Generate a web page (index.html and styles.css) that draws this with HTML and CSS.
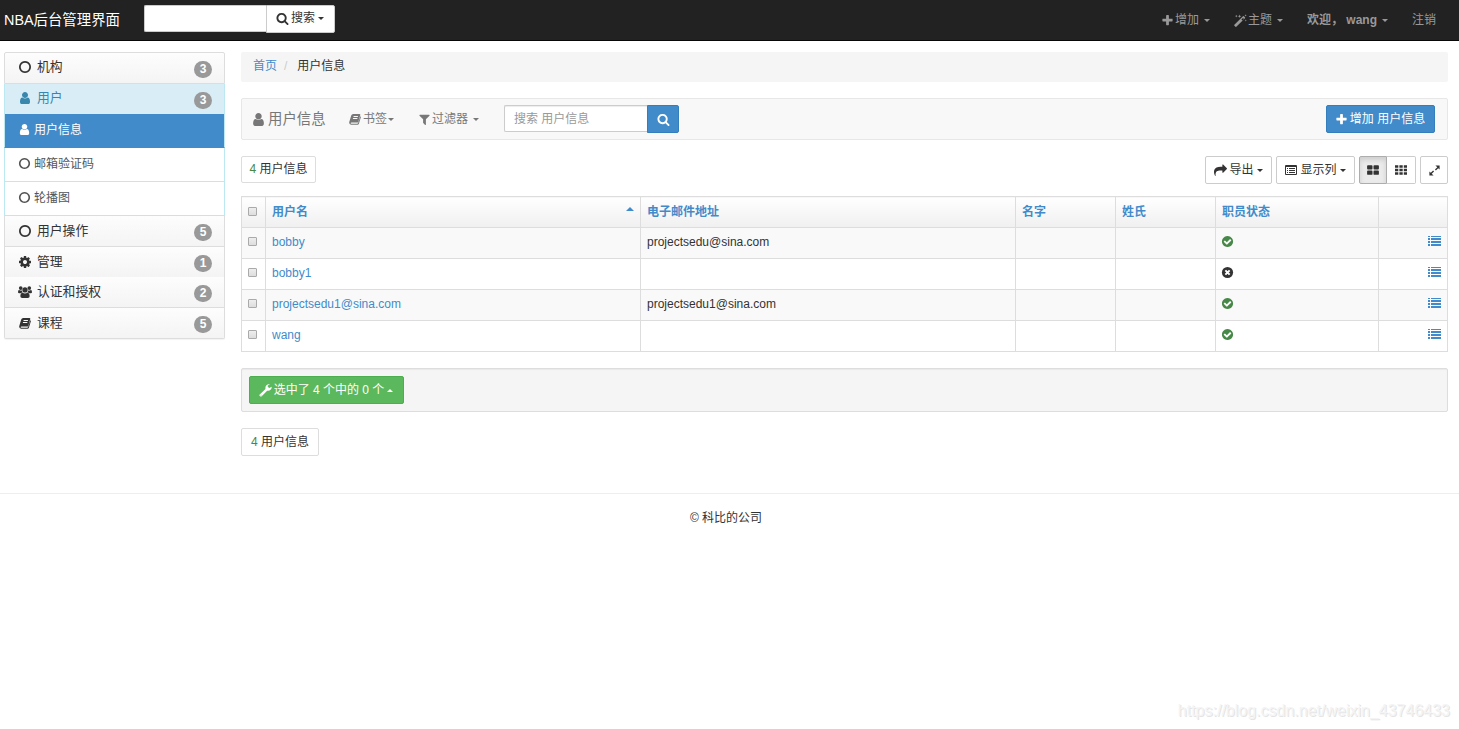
FILE: index.html
```html
<!DOCTYPE html>
<html lang="zh-CN">
<head>
    <meta charset="UTF-8">
    <meta name="viewport" content="width=device-width, initial-scale=1.0">
    <title>用户信息 | NBA后台管理界面</title>
    <link rel="stylesheet" href="styles.css">
</head>
<body>
    <svg class="sprite">
        <symbol id="search" viewBox="0 0 1792 1792"><path d="M1216 832q0-185-131.5-316.5t-316.5-131.5-316.5 131.5-131.5 316.5 131.5 316.5 316.5 131.5 316.5-131.5 131.5-316.5zm512 832q0 52-38 90t-90 38q-54 0-90-38l-343-342q-179 124-399 124-143 0-273.5-55.5t-225-150-150-225-55.5-273.5 55.5-273.5 150-225 225-150 273.5-55.5 273.5 55.5 225 150 150 225 55.5 273.5q0 220-124 399l343 343q37 37 37 90z"/></symbol>
        <symbol id="plus" viewBox="0 0 1792 1792"><path d="M1600 736v192q0 40-28 68t-68 28h-416v416q0 40-28 68t-68 28h-192q-40 0-68-28t-28-68v-416h-416q-40 0-68-28t-28-68v-192q0-40 28-68t68-28h416v-416q0-40 28-68t68-28h192q40 0 68 28t28 68v416h416q40 0 68 28t28 68z"/></symbol>
        <symbol id="user" viewBox="0 0 1792 1792"><path d="M1536 1399q0 109-62.5 187t-150.5 78h-854q-88 0-150.5-78t-62.5-187q0-85 8.5-160.5t31.5-152 58.5-131 94-89 134.500-34.500q131 128 313 128t313-128q76 0 134.500 34.500t94 89 58.500 131 31.500 152 8.500 160.500zm-256-887q0 159-112.500 271.500t-271.500 112.500-271.500-112.500-112.500-271.500 112.500-271.500 271.500-112.500 271.500 112.500 112.500 271.500z"/></symbol>
        <symbol id="circle-o" viewBox="0 0 1792 1792"><path d="M896 352q-148 0-273 73t-198 198-73 273 73 273 198 198 273 73 273-73 198-198 73-273-73-273-198-198-273-73zm768 544q0 209-103 385.5t-279.5 279.5-385.5 103-385.5-103-279.5-279.5-103-385.5 103-385.5 279.5-279.5 385.5-103 385.5 103 279.5 279.5 103 385.5z"/></symbol>
        <symbol id="cog" viewBox="0 0 1792 1792"><path d="M1152 896q0-106-75-181t-181-75-181 75-75 181 75 181 181 75 181-75 75-181zm512-109v222q0 12-8 23t-20 13l-185 28q-19 54-39 91 35 50 107 138 10 12 10 25t-9 23q-27 37-99 108t-94 71q-12 0-26-9l-138-108q-44 23-91 38-16 136-29 186-7 28-36 28h-222q-14 0-24.5-8.5t-11.5-21.5l-28-184q-49-16-90-37l-141 107q-10 9-25 9-14 0-25-11-126-114-165-168-7-10-7-23 0-12 8-23 15-21 51-66.5t54-70.5q-27-50-41-99l-183-27q-13-2-21-12.5t-8-23.5v-222q0-12 8-23t19-13l186-28q14-46 39-92-40-57-107-138-10-12-10-24 0-10 9-23 26-36 98.5-107.5t94.5-71.5q13 0 26 10l138 107q44-23 91-38 16-136 29-186 7-28 36-28h222q14 0 24.5 8.5t11.5 21.5l28 184q49 16 90 37l142-107q9-9 24-9 13 0 25 10 129 119 165 170 7 8 7 22 0 12-8 23-15 21-51 66.5t-54 70.5q26 50 41 98l183 28q13 2 21 12.5t8 23.5z"/></symbol>
        <symbol id="check" viewBox="0 0 1792 1792"><path d="M1412 734q0-28-18-46l-91-90q-19-19-45-19t-45 19l-408 407-226-226q-19-19-45-19t-45 19l-91 90q-18 18-18 46 0 27 18 45l362 362q19 19 45 19 27 0 46-19l543-543q18-18 18-45zm252 162q0 209-103 385.5t-279.5 279.5-385.5 103-385.5-103-279.5-279.5-103-385.5 103-385.5 279.5-279.5 385.5-103 385.5 103 279.5 279.5 103 385.5z"/></symbol>
        <symbol id="times" viewBox="0 0 14 14"><circle cx="7" cy="7" r="6"/><path d="M4.7 4.700l4.600 4.600M9.300 4.700l-4.600 4.600" stroke="#fff" stroke-width="2.100"/></symbol>
        <symbol id="filter" viewBox="0 0 1792 1792"><path d="M1595 295q17 41-14 70l-493 493v742q0 42-39 59-13 5-25 5-27 0-45-19l-256-256q-19-19-19-45v-486l-493-493q-31-29-14-70 17-39 59-39h1280q42 0 59 39z"/></symbol>
        <symbol id="share" viewBox="0 0 1792 1792"><path d="M1792 640q0 26-19 45l-512 512q-19 19-45 19t-45-19-19-45v-256h-224q-98 0-175.5 6t-154 21.5-133 42.5-105.5 69.5-80 101-48.5 138.5-17.5 181q0 55 5 123 0 6 2.5 23.5t2.5 26.5q0 15-8.5 25t-23.5 10q-16 0-28-17-7-9-13-22t-13.5-30-10.5-24q-127-285-127-451 0-199 53-333 162-403 875-403h224v-256q0-26 19-45t45-19 45 19l512 512q19 19 19 45z"/></symbol>
        <symbol id="book" viewBox="0 0 12 12"><path fill-rule="evenodd" d="M4.200 1h6.300q1 0 .8.900L9.300 8.700q-.3.900-1.200.9H2.400q-1 0-.8.700.1.400.8.400h5.800q.7 0 .9-.7L11.300 3.300q.8.400.5 1.300L9.900 10.700q-.3 1-1.400 1H2.100Q0 11.300.2 9.300L2.200 2.600Q2.700 1 4.200 1zM4.700 3l-.3 1h4.400l.3-1zM4.100 5l-.3 1h4.400l.3-1z"/></symbol>
        <symbol id="magic" viewBox="0 0 14 14"><path fill-rule="evenodd" d="M.4 11.700l9.300-9.300q.5-.4.900 0l1.200 1.200q.4.500 0 .9L2.500 13.800q-.4.300-.9 0L.4 12.600q-.4-.4 0-.9zM8 6l1 1 1.700-1.700-1-1zM2.500.7l.4 1.100 1.100.4-1.100.4-.4 1.100-.4-1.100-1.100-.4 1.100-.4zM6 .5l.5 1.400 1.400.5-1.400.5L6 4.300l-.5-1.400-1.400-.5 1.400-.5zM12.500.3l.3.900.9.300-.9.300-.3.900-.3-.9-.9-.3.900-.3zM12.700 5.700l.3.900.9.300-.9.300-.3.900-.3-.9-.9-.3.900-.3z"/></symbol>
        <symbol id="group" viewBox="0 0 16 14"><circle cx="3.100" cy="2.500" r="2.100"/><circle cx="12.900" cy="2.500" r="2.100"/><circle cx="8" cy="4.700" r="3"/><path d="M0 7.200q0-2.500 1.200-2.500 2 1 3.200.5.100 1.400.8 2.300-1.300.1-2.200 1H1.500Q0 8.500 0 7.200zM16 7.200q0-2.500-1.200-2.500-2 1-3.200.5-.1 1.400-.8 2.300 1.300.1 2.200 1h1.500q1.500 0 1.500-1.300zM2.700 11.800q0-3.800 2.500-4 2.800 1.700 5.600 0 2.500.2 2.500 4 0 2-2 2H4.700q-2 0-2-2z"/></symbol>
        <symbol id="list" viewBox="0 0 13 10"><path d="M0 0h2v1H0zM3 0h10v1H3zM0 2h2v2H0zM3 2h10v2H3zM0 5h2v2H0zM3 5h10v2H3zM0 8h2v2H0zM3 8h10v2H3z"/></symbol>
        <symbol id="list-alt" viewBox="0 0 12 10"><path fill-rule="evenodd" d="M1 0h10q1 0 1 1v8q0 1-1 1H1q-1 0-1-1V1q0-1 1-1zM1 2v7h10V2zM2 3h1v1H2zM4 3h6v1H4zM2 5h1v1H2zM4 5h6v1H4zM2 7h1v1H2zM4 7h6v1H4z"/></symbol>
        <symbol id="th-large" viewBox="0 0 12 10"><path d="M1 .2h3.600q.9 0 .9.900v2.500q0 .9-.9.900H1q-.9 0-.9-.9V1.100q0-.9.900-.9zM7.400.2H11q.9 0 .9.900v2.500q0 .9-.9.900H7.400q-.9 0-.9-.9V1.100q0-.9.900-.9zM1 5.500h3.600q.9 0 .9.900v2.500q0 .9-.9.900H1q-.9 0-.9-.9V6.400q0-.9.900-.9zM7.400 5.500H11q.9 0 .9.900v2.500q0 .9-.9.900H7.400q-.9 0-.9-.9V6.400q0-.9.900-.9z"/></symbol>
        <symbol id="th" viewBox="0 0 12 10"><path d="M0 .3h3.300v2.500H0zM4.400.3h3.300v2.500H4.400zM8.800.3H12v2.500H8.800zM0 3.800h3.300v2.500H0zM4.400 3.800h3.300v2.500H4.400zM8.800 3.800H12v2.500H8.800zM0 7.300h3.300v2.500H0zM4.400 7.300h3.300v2.500H4.400zM8.800 7.300H12v2.500H8.800z"/></symbol>
        <symbol id="expand" viewBox="0 0 14 14"><path d="M8 1.500h4.500V6L11 4.500 8.500 7l-1-1L10 3.500zM6 12.500H1.500V8L3 9.500 5.500 7l1 1L4 10.500z"/></symbol>
        <symbol id="wrench" viewBox="0 0 14 14"><path fill-rule="evenodd" d="M7 5.300L.8 11.200q-.8.800 0 1.600l.5.500q.8.700 1.600 0l5.900-6.100q2.300.4 3.900-1.200Q13.900 4.700 13.600 2.900L11.300 4.400 9.500 3.300V1.700L11.900.4Q9.600-.2 8 1.400 6.500 3 7 5.300zM1.700 12.400h.9v-.9h-.9z"/></symbol>
    </svg>

    <nav class="topbar">
        <a class="brand">NBA后台管理界面</a>
        <div class="top-search">
            <input type="text">
            <button class="btn"><svg class="icon"><use href="#search"/></svg>搜索<i class="caret"></i></button>
        </div>
        <ul class="top-menu">
            <li><svg class="icon"><use href="#plus"/></svg>增加<i class="caret"></i></li>
            <li><svg class="icon"><use href="#magic"/></svg>主题<i class="caret"></i></li>
            <li><strong>欢迎， wang</strong><i class="caret"></i></li>
            <li>注销</li>
        </ul>
    </nav>

    <div class="container">
        <aside class="sidebar">
            <div class="panel"><svg class="icon"><use href="#circle-o"/></svg>机构<span class="badge">3</span></div>
            <div class="panel info"><svg class="icon"><use href="#user"/></svg>用户<span class="badge">3</span></div>
            <div class="submenu">
                <a class="active"><svg class="icon"><use href="#user"/></svg>用户信息</a>
                <a><svg class="icon"><use href="#circle-o"/></svg>邮箱验证码</a>
                <a><svg class="icon"><use href="#circle-o"/></svg>轮播图</a>
            </div>
            <div class="panel"><svg class="icon"><use href="#circle-o"/></svg>用户操作<span class="badge">5</span></div>
            <div class="panel no-line"><svg class="icon"><use href="#cog"/></svg>管理<span class="badge">1</span></div>
            <div class="panel"><svg class="icon"><use href="#group"/></svg>认证和授权<span class="badge">2</span></div>
            <div class="panel"><svg class="icon book"><use href="#book"/></svg>课程<span class="badge">5</span></div>
        </aside>

        <main class="content">
            <div class="breadcrumb"><a>首页</a><span class="sep">/</span><span>用户信息</span></div>

            <div class="model-nav">
                <span class="model-title"><svg class="icon"><use href="#user"/></svg>用户信息</span>
                <span class="bookmark"><svg class="icon book"><use href="#book"/></svg>书签<i class="caret"></i></span>
                <span class="filters"><svg class="icon"><use href="#filter"/></svg>过滤器<i class="caret"></i></span>
                <div class="model-search">
                    <input type="text" placeholder="搜索 用户信息">
                    <button class="btn primary"><svg class="icon"><use href="#search"/></svg></button>
                </div>
                <button class="btn primary add"><svg class="icon"><use href="#plus"/></svg>增加 用户信息</button>
            </div>

            <div class="toolbar">
                <span class="count"><b>4</b> 用户信息</span>
                <div class="tools">
                    <button class="btn export"><svg class="icon"><use href="#share"/></svg>导出<i class="caret"></i></button>
                    <button class="btn columns"><svg class="icon grid"><use href="#list-alt"/></svg>显示列<i class="caret"></i></button>
                    <div class="btn-group">
                        <button class="btn pressed"><svg class="icon grid"><use href="#th-large"/></svg></button>
                        <button class="btn"><svg class="icon grid"><use href="#th"/></svg></button>
                    </div>
                    <button class="btn square"><svg class="icon"><use href="#expand"/></svg></button>
                </div>
            </div>

            <table class="results">
                <colgroup><col class="c-check"><col class="c-wide"><col class="c-wide"><col class="c-name"><col class="c-name"><col class="c-status"><col></colgroup>
                <thead>
                    <tr>
                        <th><input type="checkbox"></th>
                        <th><div class="sorted">用户名<i class="caret up"></i></div></th>
                        <th>电子邮件地址</th>
                        <th>名字</th>
                        <th>姓氏</th>
                        <th>职员状态</th>
                        <th></th>
                    </tr>
                </thead>
                <tbody>
                    <tr>
                        <td><input type="checkbox"></td>
                        <td><a>bobby</a></td>
                        <td>projectsedu@sina.com</td>
                        <td></td>
                        <td></td>
                        <td><svg class="icon yes"><use href="#check"/></svg></td>
                        <td class="detail"><svg class="icon"><use href="#list"/></svg></td>
                    </tr>
                    <tr>
                        <td><input type="checkbox"></td>
                        <td><a>bobby1</a></td>
                        <td></td>
                        <td></td>
                        <td></td>
                        <td><svg class="icon"><use href="#times"/></svg></td>
                        <td class="detail"><svg class="icon"><use href="#list"/></svg></td>
                    </tr>
                    <tr>
                        <td><input type="checkbox"></td>
                        <td><a>projectsedu1@sina.com</a></td>
                        <td>projectsedu1@sina.com</td>
                        <td></td>
                        <td></td>
                        <td><svg class="icon yes"><use href="#check"/></svg></td>
                        <td class="detail"><svg class="icon"><use href="#list"/></svg></td>
                    </tr>
                    <tr>
                        <td><input type="checkbox"></td>
                        <td><a>wang</a></td>
                        <td></td>
                        <td></td>
                        <td></td>
                        <td><svg class="icon yes"><use href="#check"/></svg></td>
                        <td class="detail"><svg class="icon"><use href="#list"/></svg></td>
                    </tr>
                </tbody>
            </table>

            <div class="actions">
                <button class="btn success"><svg class="icon"><use href="#wrench"/></svg>选中了 4 个中的 0 个<i class="caret up"></i></button>
            </div>

            <span class="count bottom"><b>4</b> 用户信息</span>
        </main>
    </div>

    <footer>© 科比的公司</footer>
    <div class="watermark">https://blog.csdn.net/weixin_43746433</div>
</body>
</html>
```
FILE: styles.css
```css
* {
    box-sizing: border-box;
}

body {
    margin: 0;
    height: 729px;
    position: relative;
    overflow: hidden;
    background: #fff;
    color: #333;
    font: 12px/18px "Liberation Sans", "Noto Sans CJK SC", sans-serif;
}

a {
    color: #428bca;
}

input, button {
    font: inherit;
    margin: 0;
}

.sprite {
    display: none;
}

.icon {
    width: 13px;
    height: 13px;
    flex: none;
    fill: currentColor;
}

.icon.book {
    width: 12px;
    height: 12px;
}

.icon.grid {
    width: 12px;
    height: 10px;
}

.caret {
    width: 0;
    height: 0;
    margin-left: 3px;
    border: 3.5px solid transparent;
    border-top: 3.5px solid currentColor;
    border-bottom: 0;
}

.caret.up {
    border-top: 0;
    border-bottom: 3px solid currentColor;
}

.btn {
    display: flex;
    align-items: center;
    justify-content: center;
    height: 28px;
    padding: 0;
    background: #fff;
    border: 1px solid #ccc;
    border-radius: 2px;
    color: #333;
    white-space: nowrap;
}

.btn .icon {
    margin-right: 2px;
}

.primary {
    background: #428bca;
    border-color: #357ebd;
    color: #fff;
}

/* top bar */
.topbar {
    display: flex;
    height: 41px;
    padding-left: 4px;
    background: #222;
    border-bottom: 1px solid #080808;
}

.brand {
    width: 140px;
    font-size: 14.4px;
    line-height: 41px;
    color: #fff;
    white-space: nowrap;
}

.top-search {
    display: flex;
    padding-top: 5px;
}

.top-search input {
    width: 122px;
    height: 27px;
    border: 1px solid #ccc;
    border-right: 0;
    border-radius: 2px 0 0 2px;
}

.top-search .btn {
    width: 69px;
    padding: 0 1px 2px 0;
    border-radius: 0 2px 2px 0;
}

.top-menu {
    display: flex;
    margin: 0 23px 0 auto;
    padding: 0;
    gap: 24px;
    list-style: none;
    color: #999;
}

.top-menu li {
    display: flex;
    align-items: center;
    white-space: pre;
}

.top-menu .icon {
    margin-right: 1px;
}

.top-menu .caret {
    margin-left: 5px;
}

/* layout */
.container {
    display: flex;
    gap: 16px;
    padding: 11px 11px 0 4px;
}

.sidebar {
    width: 221px;
    flex: none;
}

.content {
    flex: 1;
}

/* side menu */
.panel {
    display: flex;
    align-items: center;
    height: 31px;
    padding: 0 12px 1px 13px;
    border: 1px solid #ddd;
    border-top: 0;
    background: linear-gradient(#fdfdfd, #f4f4f4);
    font-size: 12.8px;
}

.panel:first-child {
    height: 32px;
    padding-bottom: 2px;
    border-top: 1px solid #ddd;
    border-radius: 2px 2px 0 0;
}

.panel:last-child {
    border-radius: 0 0 2px 2px;
    box-shadow: 0 1px 1px rgba(0, 0, 0, 0.05);
}

.panel.info {
    height: 30px;
    padding-bottom: 2px;
    border-color: #bce8f1;
    border-bottom: 0;
    background: #d9edf7;
    color: #3a87ad;
}

.panel.no-line {
    height: 30px;
    border-bottom: 0;
}

.panel .icon {
    width: 14px;
    height: 14px;
    margin-right: 5px;
}

.panel .icon.book {
    width: 12px;
    height: 12px;
    margin: 0 6px 0 1px;
}

.badge {
    width: 18px;
    height: 17px;
    margin: 4px 0 0 auto;
    border-radius: 9px;
    background: #999;
    color: #fff;
    font-size: 12px;
    font-weight: bold;
    line-height: 17px;
    text-align: center;
}

.submenu a {
    display: flex;
    align-items: center;
    height: 34px;
    padding: 0 0 2px 13px;
    border: 1px solid #ddd;
    border-width: 0 1px 1px;
    border-left-color: #bce8f1;
    border-right-color: #bce8f1;
    color: #555;
}

.submenu a:last-child {
    border-bottom-color: #bce8f1;
}

.submenu .active {
    border-bottom-color: #428bca;
    background: #428bca;
    color: #fff;
}

.submenu .icon {
    margin-right: 3px;
}

/* content header */
.breadcrumb {
    display: flex;
    height: 30px;
    padding: 0 12px;
    border-radius: 2px;
    background: #f5f5f5;
    line-height: 28px;
}

.sep {
    margin: 0 10px 0 7px;
    color: #ccc;
}

.model-nav {
    display: flex;
    align-items: center;
    height: 42px;
    margin: 16px 0;
    padding: 0 12px 0 10px;
    background: #f8f8f8;
    border: 1px solid #e7e7e7;
    border-radius: 2px;
    color: #777;
}

.model-nav span {
    display: flex;
    align-items: center;
}

.model-title {
    width: 97px;
    font-size: 14.4px;
}

.model-title .icon {
    width: 15px;
    height: 15px;
    margin: 0 2px 0 -1px;
}

.bookmark {
    width: 69px;
}

.bookmark .icon {
    margin-right: 2px;
}

.bookmark .caret {
    margin-left: 1px;
}

.filters {
    width: 86px;
}

.filters .icon {
    margin-right: 1px;
}

.filters .caret {
    margin-left: 5px;
}

.model-search {
    display: flex;
}

.model-search input {
    width: 143px;
    height: 27px;
    padding: 0 9px;
    border: 1px solid #ccc;
    border-right: 0;
    border-radius: 2px 0 0 2px;
    box-shadow: inset 0 1px 1px rgba(0, 0, 0, 0.075);
}

.model-search input::placeholder {
    color: #999;
}

.model-search .btn {
    width: 32px;
    border-radius: 0 2px 2px 0;
}

.model-search .icon {
    margin: 0;
}

.add {
    width: 109px;
    margin-left: auto;
}

.add .icon {
    margin: 0 2px 0 -1px;
}

.toolbar {
    display: flex;
    justify-content: space-between;
    height: 28px;
    margin-bottom: 12px;
}

.count {
    display: block;
    width: 75px;
    height: 27px;
    border: 1px solid #ddd;
    border-radius: 2px;
    line-height: 25px;
    text-align: center;
    white-space: nowrap;
}

.count b {
    color: #468847;
    font-weight: normal;
}

.count.bottom {
    width: 78px;
    height: 28px;
    line-height: 26px;
}

.tools {
    display: flex;
    gap: 4px;
}

.export {
    width: 67px;
}

.columns {
    width: 79px;
}

.columns .icon.grid {
    margin-right: 3px;
}

.btn-group {
    display: flex;
}

.btn-group .btn, .square {
    width: 28px;
}

.btn-group .icon, .square .icon {
    margin: 0;
}

.btn-group .btn:last-child {
    width: 29px;
    border-left: 0;
    border-radius: 0 2px 2px 0;
}

.btn-group .pressed {
    background: #ebebeb;
    border-color: #adadad;
    border-radius: 2px 0 0 2px;
    box-shadow: inset 0 3px 5px rgba(0, 0, 0, 0.125);
}

/* result list */
.results {
    width: 1207px;
    table-layout: fixed;
    border-collapse: collapse;
}

.c-check {
    width: 24px;
}

.c-wide {
    width: 375px;
}

.c-name {
    width: 100px;
}

.c-status {
    width: 163px;
}

.results th, .results td {
    height: 31px;
    padding: 0 6px 2px;
    border: 1px solid #ddd;
    text-align: left;
}

.results th {
    padding-bottom: 0;
    background: linear-gradient(#fff, #f0f0f0);
    color: #428bca;
}

.results tbody tr:nth-child(odd) {
    background: #f9f9f9;
}

.results input {
    display: block;
    appearance: none;
    width: 9px;
    height: 9px;
    margin-bottom: 2px;
    border: 1px solid #aaa;
    border-radius: 1px;
    background: linear-gradient(#eee, #ddd);
}

.results .icon {
    display: block;
    margin: 0 0 1px -1px;
}

.results .yes {
    color: #468847;
}

.results .detail .icon {
    width: 13px;
    height: 10px;
    margin: 0 0 2px auto;
    color: #428bca;
}

.sorted {
    display: flex;
    justify-content: space-between;
}

.sorted .caret.up {
    margin-top: 4px;
    border-width: 0 4px 4px;
}

.actions {
    height: 44px;
    margin: 16px 0;
    padding: 7px;
    background: #f5f5f5;
    border: 1px solid #ddd;
    border-radius: 2px;
    box-shadow: inset 0 1px 1px rgba(0, 0, 0, 0.05);
}

.success {
    width: 155px;
    background: #5cb85c;
    border-color: #4cae4c;
    color: #fff;
}

.success .icon {
    margin-left: -1px;
}

footer {
    margin-top: 37px;
    padding-top: 15px;
    padding-right: 7px;
    border-top: 1px solid #eee;
    text-align: center;
}

.watermark {
    position: absolute;
    right: 9px;
    bottom: 8px;
    color: #f4f4f4;
    font-size: 16px;
    line-height: 20px;
    text-shadow: 1px 1px 0 #e4e4e4;
}
```
